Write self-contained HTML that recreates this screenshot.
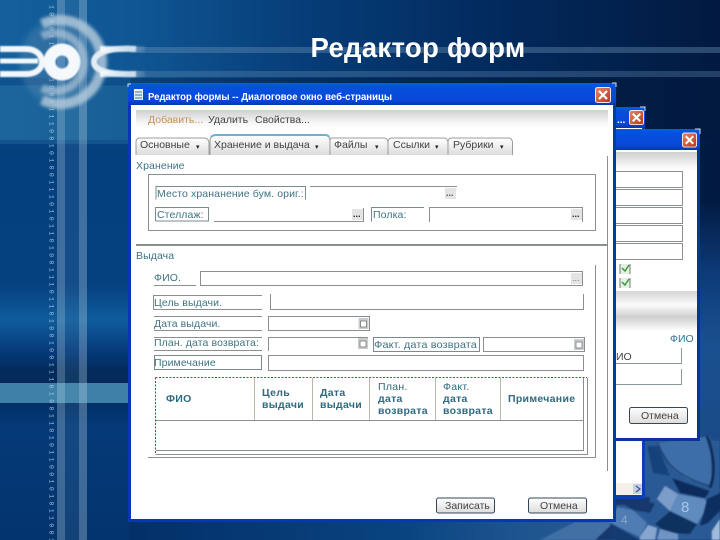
<!DOCTYPE html>
<html><head><meta charset="utf-8"><style>
html,body{margin:0;padding:0;background:#03336b;width:720px;height:540px;overflow:hidden}
svg{display:block;position:absolute;left:0;top:0}
text{font-family:"Liberation Sans",sans-serif}
.l{font-size:10.5px;fill:#3f7482;letter-spacing:.1px}
.d{font-size:10.5px;fill:#444}
.h{font-size:10.5px;font-weight:bold;fill:#2f6a80;letter-spacing:.3px}
.t{font-size:10px;font-weight:bold;fill:#fff}
.f{fill:#fff;stroke:#8a8f90;stroke-width:1}
</style></head><body>
<svg width="720" height="540" viewBox="0 0 720 540" xmlns="http://www.w3.org/2000/svg">
<defs>
<linearGradient id="bg" x1="0" y1="0" x2="1" y2="0"><stop offset="0" stop-color="#14609c"/><stop offset=".2" stop-color="#0f5592"/><stop offset=".42" stop-color="#063d78"/><stop offset=".7" stop-color="#02295c"/><stop offset="1" stop-color="#021a40"/></linearGradient>
<linearGradient id="lb" gradientUnits="userSpaceOnUse" x1="0" y1="140" x2="0" y2="540">
<stop offset="0" stop-color="#07478a"/><stop offset=".02" stop-color="#043f7e"/><stop offset=".36" stop-color="#05407f"/>
<stop offset=".45" stop-color="#0f5c9c"/><stop offset=".53" stop-color="#05397a"/><stop offset=".58" stop-color="#022a5a"/>
<stop offset=".607" stop-color="#022a5a"/><stop offset=".608" stop-color="#3f80a8"/><stop offset=".657" stop-color="#3f80a8"/><stop offset=".658" stop-color="#023168"/>
<stop offset=".72" stop-color="#043a78"/><stop offset="1" stop-color="#04346e"/></linearGradient>
<linearGradient id="rs" gradientUnits="userSpaceOnUse" x1="0" y1="200" x2="0" y2="440"><stop offset="0" stop-color="#021a40"/><stop offset=".3" stop-color="#0d3a78"/><stop offset=".6" stop-color="#1a508f"/><stop offset="1" stop-color="#1a4b88"/></linearGradient>
<linearGradient id="dk" x1="0" y1="0" x2="1" y2="0"><stop offset="0" stop-color="#021c44" stop-opacity=".35"/><stop offset=".6" stop-color="#021c44" stop-opacity=".6"/><stop offset="1" stop-color="#021a40"/></linearGradient>
<linearGradient id="bot" gradientUnits="userSpaceOnUse" x1="129" y1="0" x2="616" y2="0"><stop offset="0" stop-color="#033068"/><stop offset=".55" stop-color="#09437f"/><stop offset=".8" stop-color="#1d5590"/><stop offset="1" stop-color="#2a5a92"/></linearGradient>
<linearGradient id="tb" x1="0" y1="0" x2="0" y2="1"><stop offset="0" stop-color="#0a5ce0"/><stop offset=".15" stop-color="#0452dc"/><stop offset=".8" stop-color="#0a46d8"/><stop offset="1" stop-color="#0436b0"/></linearGradient>
<linearGradient id="tl" x1="0" y1="0" x2="0" y2="1"><stop offset="0" stop-color="#cfcfcf"/><stop offset=".7" stop-color="#f6f6f6"/><stop offset="1" stop-color="#fff"/></linearGradient>
<linearGradient id="tab" x1="0" y1="0" x2="0" y2="1"><stop offset="0" stop-color="#fff"/><stop offset="1" stop-color="#dcdcdc"/></linearGradient>
<linearGradient id="mid" x1="0" y1="0" x2="0" y2="1"><stop offset="0" stop-color="#d4d4d4"/><stop offset=".35" stop-color="#fbfbfb"/><stop offset=".65" stop-color="#cfcfcf"/><stop offset="1" stop-color="#fff"/></linearGradient>
<linearGradient id="x" x1="0" y1="0" x2="1" y2="1"><stop offset="0" stop-color="#e8896a"/><stop offset="1" stop-color="#b8341c"/></linearGradient>
<linearGradient id="hl" x1="0" y1="0" x2="1" y2="0"><stop offset="0" stop-color="#fff" stop-opacity=".9"/><stop offset=".5" stop-color="#cfe0ee" stop-opacity=".7"/><stop offset="1" stop-color="#8fb0cc" stop-opacity=".2"/></linearGradient>
<filter id="b1" x="-20%" y="-20%" width="140%" height="140%"><feGaussianBlur stdDeviation=".7"/></filter>
<filter id="b2" x="-20%" y="-20%" width="140%" height="140%"><feGaussianBlur stdDeviation="1.5"/></filter>
<filter id="b3" x="-20%" y="-20%" width="140%" height="140%"><feGaussianBlur stdDeviation="3"/></filter>
<symbol id="close" viewBox="0 0 16 16"><rect x=".5" y=".5" width="15" height="15" rx="2" fill="url(#x)" stroke="#f4e8e0"/><path d="M4 4L12 12M12 4L4 12" stroke="#fff" stroke-width="2.2"/></symbol>
<symbol id="cal" viewBox="0 0 10 11"><rect width="10" height="11" fill="#c9cdd0"/><rect x="2" y="3" width="6" height="6" fill="#fff" stroke="#777" stroke-width=".8"/></symbol>
</defs>

<!-- background -->
<rect width="720" height="540" fill="url(#bg)"/>
<rect x="0" y="140" width="720" height="400" fill="url(#lb)"/>
<rect x="130" y="78" width="590" height="170" fill="url(#dk)"/>
<rect x="130" y="47" width="590" height="6" fill="#6a90b4" opacity=".4"/>
<rect x="130" y="71" width="590" height="6" fill="#6a90b4" opacity=".32"/>
<rect x="0" y="78" width="129" height="7" fill="#0b4a86" opacity=".6"/>
<rect x="0" y="86" width="129" height="58" fill="#2a709e" opacity=".35"/>
<rect x="129" y="518" width="487" height="22" fill="url(#bot)"/>

<!-- right photo -->
<rect x="700" y="200" width="20" height="240" fill="url(#rs)"/>
<g filter="url(#b1)">
<rect x="616" y="440" width="104" height="100" fill="#2b5a95"/>
<path d="M540 540L575 522H616V540Z" fill="#5a84b4" opacity=".55"/>
<path d="M595 540L612 524H616V540Z" fill="#14386c"/>
<path d="M616 497H650V505L616 505Z" fill="#14396e"/>
<path d="M617 500L655 503L650 513L633 510Z" fill="#12376c"/>
<path d="M647 446L658 446L670 476L653 473Z" fill="#17427b"/>
<path d="M658 443L673 469L687 479L712 486L710 436Z" fill="#3d6ea8"/>
<path d="M658 443C663 460 675 476 710 486" fill="none" stroke="#1b3f74" stroke-width="1.500"/>
<path d="M707 436C714 455 716 472 710 488" fill="none" stroke="#0f2a58" stroke-width="3"/>
<path d="M672 478L710 491L705 498L680 493Z" fill="#0f2c5c"/>
<path d="M665 486L678 494L670 511L657 499Z" fill="#7b9dc8"/>
<path d="M678 494L705 499L708 506L697 524L670 511Z" fill="#5f8bbf"/>
<path d="M655 524L670 511L697 524L690 534L667 533Z" fill="#10305f"/>
<path d="M617 507L633 510L647 523L640 537L610 523Z" fill="#4f7cb2"/>
<path d="M660 529L678 534L678 540H657Z" fill="#6f94c5"/>
<path d="M707 499L720 493V511L708 523L700 526Z" fill="#112f60"/>
<path d="M712 531L720 519V540H712Z" fill="#9fbbdc"/>
<path d="M610 523L640 540H610Z" fill="#123a70"/>
<path d="M640 537L648 525L657 528L655 540H640Z" fill="#86a6d0"/>
</g>
<text x="681" y="512" font-size="15" fill="#a9c6e6">8</text>
<text x="621" y="524" font-size="12" fill="#86a8d2">4</text>

<!-- vertical strips -->
<rect x="57" y="0" width="8" height="540" fill="#b8d2e4" opacity=".32"/>
<rect x="65" y="0" width="14" height="540" fill="#9fc0da" opacity=".1"/>
<rect x="79" y="0" width="8" height="540" fill="#b6d0e2" opacity=".34"/>

<!-- binary digits -->
<text font-size="6.5" fill="#b5d0e4" opacity=".85" transform="translate(49.500,5) rotate(90)" letter-spacing="3.4" style="font-family:'Liberation Mono',monospace">10001110101000111001010011101011010011101101001001110100110101100101011001</text>

<!-- logo -->
<circle cx="63" cy="62" r="44" fill="#7ea6c4" opacity=".25" filter="url(#b3)"/>
<g filter="url(#b2)">
<path d="M42 24A42 42 0 1 1 42 100" fill="none" stroke="#b4cadc" stroke-width="10" opacity=".8"/>
<path d="M42 36A29 29 0 1 1 42 88" fill="none" stroke="#b4cadc" stroke-width="8" opacity=".65"/>
</g>
<g filter="url(#b1)">
<circle cx="62" cy="62" r="12.500" fill="none" stroke="#f5f9fc" stroke-width="12"/>
<path d="M0 49H26C36 49 42 55 42 62C42 69 36 74 26 74H0" fill="none" stroke="#f2f7fb" stroke-width="6"/>
<rect x="0" y="58.500" width="38" height="5" fill="#f3f8fc"/>
<path d="M136 49C104 47 94 55 94 62C94 69 104 75 136 74" fill="none" stroke="#e4edf4" stroke-width="6"/>
<rect x="100" y="46" width="45" height="6" fill="url(#hl)"/>
<rect x="100" y="71" width="45" height="6" fill="url(#hl)"/>
</g>

<!-- title -->
<text x="310.500" y="57" font-size="27.500" font-weight="bold" fill="#fff" letter-spacing=".3">Редактор форм</text>

<!-- window 2 -->
<rect x="600" y="107" width="45" height="392" fill="#0a3fb8"/>
<rect x="600" y="107" width="45" height="21" fill="url(#tb)"/>
<rect x="600" y="128" width="42" height="367" fill="#fff"/>
<rect x="600" y="483" width="42" height="12" fill="#f3f0e6"/>
<rect x="633" y="484" width="9" height="10" fill="#c3cfe8"/>
<path d="M636 486L640 489L636 492" fill="none" stroke="#3a558f" stroke-width="1.2"/>
<text x="617" y="123" class="t">...</text>
<use href="#close" x="629" y="110" width="15" height="15"/>

<!-- window 3 -->
<rect x="600" y="129" width="100" height="312" fill="#0a3596"/>
<rect x="600" y="129" width="100" height="21" fill="url(#tb)"/>
<rect x="600" y="150" width="97" height="288" fill="#fff"/>
<rect x="600" y="152" width="97" height="20" fill="url(#tl)"/>
<rect x="600" y="171.500" width="82.500" height="16" class="f"/>
<rect x="600" y="189.500" width="82.500" height="16" class="f"/>
<rect x="600" y="207.500" width="82.500" height="16" class="f"/>
<rect x="600" y="225.500" width="82.500" height="16" class="f"/>
<rect x="600" y="243.500" width="82.500" height="16" class="f"/>
<rect x="620" y="264" width="10" height="10" fill="#e3f1e3"/><path d="M620 264V274M630 264V274" stroke="#777"/><path d="M622 268L625 271L629 265" fill="none" stroke="#3c9a3c" stroke-width="1.500"/>
<rect x="620" y="278" width="10" height="10" fill="#e3f1e3"/><path d="M620 278V288M630 278V288" stroke="#777"/><path d="M622 282L625 285L629 279" fill="none" stroke="#3c9a3c" stroke-width="1.500"/>
<rect x="600" y="291" width="97" height="40" fill="url(#mid)"/>
<text x="670" y="342" font-size="10.500" fill="#2f7298">ФИО</text>
<path d="M600 363.500H681.500V348" fill="none" stroke="#8a9a9c"/>
<path d="M600 384.500H681.500V369" fill="none" stroke="#8a9a9c"/>
<text x="616" y="360" class="d">ИО</text>
<rect x="629.500" y="407.500" width="58" height="16" rx="2" fill="url(#tab)" stroke="#33475a"/>
<text x="641" y="419" class="d">Отмена</text>
<use href="#close" x="682" y="132" width="15" height="16"/>
<path d="M695 129H700V134" fill="none" stroke="#cfe0f7"/>
<path d="M640 107H645V111" fill="none" stroke="#cfe0f7"/>

<!-- main window -->
<rect x="128" y="83" width="488" height="439" fill="#0638b0"/>
<rect x="128" y="83" width="488" height="22" fill="url(#tb)"/>
<rect x="131" y="105" width="482" height="414" fill="#fff"/>
<rect x="136" y="110" width="472" height="18" fill="url(#tl)"/>
<path d="M612 83H616V87M128 87V84H131" fill="none" stroke="#cfe0f7"/>
<rect x="134" y="89" width="9" height="11" fill="#e6edf5"/>
<path d="M135 92h7M135 95h7M135 98h7" stroke="#47719f"/>
<text x="148" y="100" class="t" textLength="244" lengthAdjust="spacingAndGlyphs">Редактор формы -- Диалоговое окно веб-страницы</text>
<use href="#close" x="595" y="87" width="16" height="16"/>

<!-- toolbar -->
<text x="148" y="123" font-size="10.500" fill="#c89050">Добавить...</text>
<text x="208" y="123" class="d">Удалить</text>
<text x="255" y="123" class="d">Свойства...</text>

<!-- tabs -->
<g stroke="#9a9e9f" fill="url(#tab)">
<path d="M136 155V142Q136 138 140 138H204Q208 138 209 142V155"/>
<path d="M330 155V140L331 138H384Q387 138 388 142V155"/>
<path d="M388 155V142Q388 138 392 138H444Q447 138 448 142V155"/>
<path d="M448 155V142Q448 138 452 138H508Q512 138 512.500 142V155"/>
<path d="M210 155V140Q211 135 216 135H325Q329 135 330 140V155"/>
</g>
<path d="M211 137Q213 135 216 135H325Q328 135 329 137" fill="none" stroke="#6fb0d4" stroke-width="2"/>
<text x="140" y="148" class="d">Основные</text><text x="196" y="149" font-size="7" fill="#222">▾</text>
<text x="214" y="148" class="d">Хранение и выдача</text><text x="315" y="149" font-size="7" fill="#222">▾</text>
<text x="334" y="148" class="d">Файлы</text><text x="375" y="149" font-size="7" fill="#222">▾</text>
<text x="393" y="148" class="d">Ссылки</text><text x="435" y="149" font-size="7" fill="#222">▾</text>
<text x="453" y="148" class="d">Рубрики</text><text x="500" y="149" font-size="7" fill="#222">▾</text>
<path d="M607.500 156V471" stroke="#8a8f90"/>

<!-- Хранение -->
<text x="136" y="169" class="l">Хранение</text>
<rect x="148.500" y="174.500" width="447" height="56" fill="#fff" stroke="#8a8f90"/>
<path d="M156 199.500V186.500H305.500V199.500" fill="none" stroke="#7c8a8c"/>
<text x="157" y="197" class="l">Место хрананение бум. ориг.:</text>
<path d="M310 186.500H457" stroke="#8a8f90"/>
<rect x="445" y="188" width="11" height="11" fill="#e4e4e4"/><text x="446" y="196" font-size="9" font-weight="bold" fill="#555">...</text>
<path d="M155.500 221V207.500H208.500V221H155.500" fill="#fff" stroke="#7c8a8c"/>
<text x="157" y="218" class="l">Стеллаж:</text>
<path d="M214 221.500H363.500V208" fill="none" stroke="#8a8f90"/>
<rect x="352" y="209" width="11" height="11" fill="#e4e4e4"/><text x="353" y="217" font-size="9" font-weight="bold" fill="#222">...</text>
<path d="M371.500 221.500V207.500H424" fill="none" stroke="#7c8a8c"/>
<text x="373" y="218" class="l">Полка:</text>
<path d="M429.500 222V207.500H582.500V222" fill="none" stroke="#8a8f90"/>
<rect x="571" y="209" width="11" height="11" fill="#e4e4e4"/><text x="572" y="217" font-size="9" font-weight="bold" fill="#222">...</text>

<!-- Выдача -->
<rect x="136" y="244" width="472" height="2" fill="#8a8f90"/>
<text x="136" y="259" class="l">Выдача</text>
<path d="M595.500 265V457.500H148" fill="none" stroke="#8a8f90"/>
<text x="154" y="281" class="l">ФИО.</text>
<path d="M154 285.500H196" stroke="#8a8f90"/>
<rect x="200.500" y="271.500" width="382" height="14" class="f"/>
<rect x="571" y="273" width="11" height="11" fill="#e4e4e4"/><text x="572" y="281" font-size="9" fill="#777">...</text>
<path d="M153.500 309.500V295.500H262M153.500 309.500H262" fill="none" stroke="#8a8f90"/>
<text x="154" y="306" class="l">Цель выдачи.</text>
<path d="M270.500 310V294M270.500 309.500H583.500V294" fill="none" stroke="#8a8f90"/>
<path d="M154 316.500H262M154 330.500H262" stroke="#8a8f90"/>
<text x="154" y="327" class="l">Дата выдачи.</text>
<rect x="268.500" y="316.500" width="101" height="14" class="f"/>
<use href="#cal" x="358.500" y="318" width="10" height="11"/>
<path d="M154 337.500H262M154 350.500H262" stroke="#8a8f90"/>
<text x="154" y="346" class="l" textLength="105" lengthAdjust="spacingAndGlyphs">План. дата возврата:</text>
<path d="M268.500 351V337.500H368" fill="none" stroke="#8a8f90"/>
<use href="#cal" x="358" y="338" width="10" height="11"/>
<rect x="373.500" y="337.500" width="106" height="14" fill="#fff" stroke="#7c8a8c"/>
<text x="374" y="348" class="l" textLength="103" lengthAdjust="spacingAndGlyphs">Факт. дата возврата</text>
<rect x="483.500" y="337.500" width="101" height="14" class="f"/>
<use href="#cal" x="574" y="338.500" width="10" height="12"/>
<rect x="154.500" y="355.500" width="107" height="14" fill="#fff" stroke="#7c8a8c"/>
<text x="154" y="366" class="l">Примечание</text>
<rect x="268.500" y="355.500" width="315" height="15" class="f"/>

<!-- table -->
<path d="M155.500 377.500H587" fill="none" stroke="#b03a3a" stroke-dasharray="2 1.500"/>
<path d="M155.500 377.500V453" fill="none" stroke="#8a3a3a" stroke-dasharray="2 1.500"/>
<path d="M156 420.500H583.500M583.500 378V451M156 450.500H583.500M155.500 454.500H587.500V378" fill="none" stroke="#8a8f90"/>
<path d="M254.500 378V420M312.500 378V420M369.500 378V420M435.500 378V420M500.500 378V420" stroke="#b9b8ac"/>
<text x="166" y="402" class="h">ФИО</text>
<text x="262" y="396" class="h">Цель</text><text x="262" y="408" class="h">выдачи</text>
<text x="320" y="396" class="h">Дата</text><text x="320" y="408" class="h">выдачи</text>
<text x="378" y="390" class="h" style="font-weight:normal">План.</text><text x="378" y="402" class="h">дата</text><text x="378" y="414" class="h">возврата</text>
<text x="443" y="390" class="h" style="font-weight:normal">Факт.</text><text x="443" y="402" class="h">дата</text><text x="443" y="414" class="h">возврата</text>
<text x="508" y="402" class="h">Примечание</text>

<!-- buttons -->
<rect x="436.500" y="498" width="58" height="15" rx="2" fill="url(#tab)" stroke="#33475a"/>
<text x="445" y="509" class="d">Записать</text>
<rect x="528.500" y="498" width="58" height="15" rx="2" fill="url(#tab)" stroke="#33475a"/>
<text x="540" y="509" class="d">Отмена</text>
</svg>
</body></html>
